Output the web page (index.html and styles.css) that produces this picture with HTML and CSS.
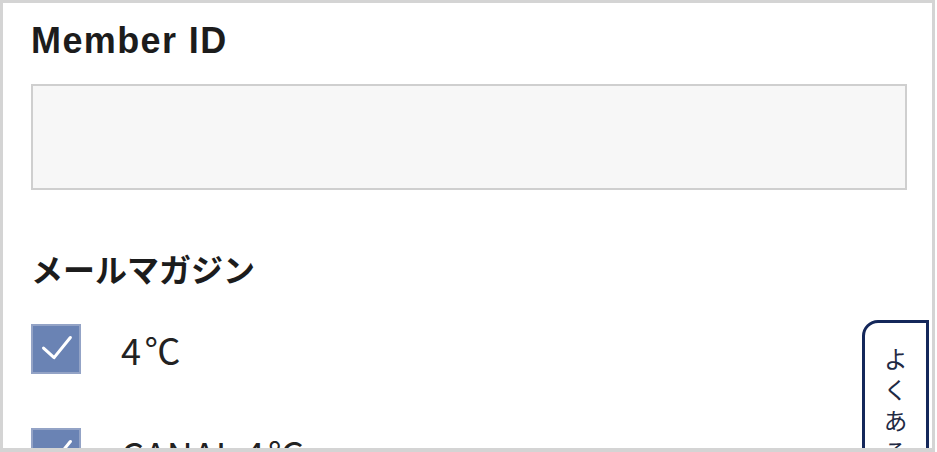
FILE: index.html
```html
<!DOCTYPE html>
<html lang="ja">
<head>
<meta charset="utf-8">
<link rel="stylesheet" href="styles.css">
</head>
<body>
<div class="frame">
  <div class="content">
    <label class="field-label">Member ID</label>
    <div class="text-input"></div>
    <h2 class="section-title">メールマガジン</h2>
    <ul class="options">
      <li class="option">
        <span class="checkbox">
          <svg viewBox="0 0 48 48" width="48" height="48"><path d="M11 31 L22 41 L39 20" fill="none" stroke="#fff" stroke-width="3.2" stroke-linecap="round" stroke-linejoin="round" transform="translate(0,-8)"/></svg>
        </span>
        <span class="option-text">4<span class="unit">℃</span></span>
      </li>
      <li class="option">
        <span class="checkbox">
          <svg viewBox="0 0 48 48" width="48" height="48"><path d="M11 31 L22 41 L39 20" fill="none" stroke="#fff" stroke-width="3.2" stroke-linecap="round" stroke-linejoin="round" transform="translate(0,-8)"/></svg>
        </span>
        <span class="option-text">CANAL 4<span class="unit">℃</span></span>
      </li>
    </ul>
  </div>
  <a class="faq-tab">よくある質問</a>
</div>
</body>
</html>
```
FILE: styles.css
```css
html, body {
  margin: 0;
  padding: 0;
  background: #fff;
}
body {
  font-family: "Noto Sans CJK JP", "Noto Sans", sans-serif;
  color: #1a1a1a;
}
.frame {
  position: relative;
  width: 935px;
  height: 452px;
  box-sizing: border-box;
  border: 3px solid #d4d4d4;
  border-bottom-width: 4px;
  overflow: hidden;
  background: #fff;
}
.content {
  padding: 16px 0 0 28px;
}
.field-label {
  display: block;
  font-family: "Liberation Sans", "Noto Sans CJK JP", sans-serif;
  font-size: 36px;
  font-weight: 700;
  line-height: 44px;
  letter-spacing: 1.4px;
  color: #1c1c1c;
}
.text-input {
  margin-top: 21px;
  width: 876px;
  height: 106px;
  box-sizing: border-box;
  border: 2px solid #cfcfcf;
  background: #f7f7f7;
}
.section-title {
  margin: 56px 0 0;
  font-size: 32px;
  font-weight: 700;
  line-height: 44px;
  color: #1c1c1c;
}
.options {
  list-style: none;
  margin: 33px 0 0;
  padding: 0;
}
.option {
  display: flex;
  align-items: center;
  height: 52px;
  margin-bottom: 52px;
}
.checkbox {
  width: 50px;
  height: 50px;
  box-sizing: border-box;
  border: 2px solid #93a3c6;
  background: #6a83b4;
  display: flex;
  align-items: center;
  justify-content: center;
  flex: none;
}
.checkbox svg {
  display: block;
}
.option-text {
  margin-left: 40px;
  font-size: 36px;
  font-weight: 400;
  color: #222;
  letter-spacing: 0.5px;
}
.unit {
  margin-left: 3px;
}
.faq-tab {
  position: absolute;
  left: 859px;
  top: 317px;
  width: 67px;
  height: 200px;
  box-sizing: border-box;
  border: 3px solid #14275a;
  border-top-left-radius: 16px;
  background: #fff;
  writing-mode: vertical-rl;
  white-space: nowrap;
  font-size: 24px;
  letter-spacing: 7px;
  line-height: 61px;
  padding-top: 24px;
  color: #1f2a44;
}
```
